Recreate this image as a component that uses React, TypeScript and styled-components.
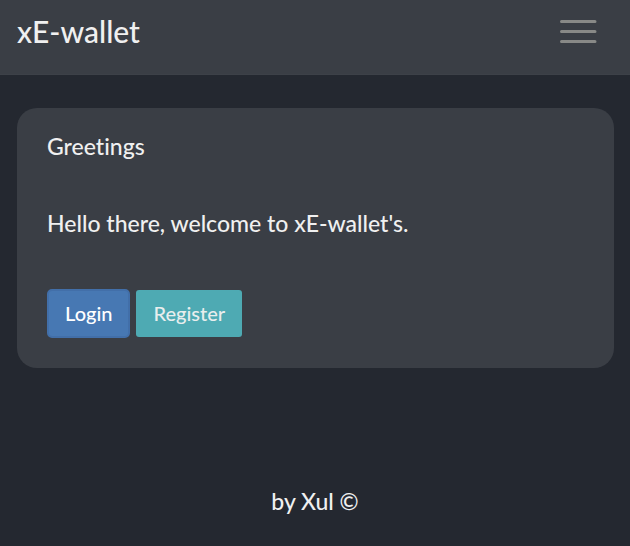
import React from "react";
import styled, { createGlobalStyle } from "styled-components";

const GlobalStyle = createGlobalStyle`
  * { box-sizing: border-box; }
  body {
    margin: 0;
    background: #242830;
    color: #f0f0f0;
    font-family: Lato, "Liberation Sans", sans-serif;
    font-size: 23px;
    font-weight: 500;
    line-height: 36px;
    font-variant-ligatures: none;
    -webkit-font-smoothing: antialiased;
  }
`;

const Navbar = styled.header`
  display: flex;
  justify-content: space-between;
  align-items: flex-start;
  padding: 13px 33px 25px 17px;
  border-bottom: 1px solid #3d4148;
  background: #3a3e45;
`;

const Brand = styled.a`
  color: inherit;
  font-size: 30px;
  text-decoration: none;
`;

const MenuButton = styled.button`
  display: flex;
  padding: 5px 0;
  border: 0;
  background: none;
  color: #888987;
  cursor: pointer;
`;

const Card = styled.main`
  margin: 33px 16px 0 17px;
  padding: 20px 30px 30px;
  border-radius: 20px;
  background: #3a3e45;
`;

const Title = styled.h1`
  margin: 0 0 41px;
  font-size: 23px;
  font-weight: 500;
`;

const Message = styled.p`
  margin: 0 0 48px;
`;

const Actions = styled.div`
  display: flex;
  align-items: center;
  gap: 6px;
`;

const Button = styled.button<{ $primary?: boolean }>`
  padding: ${(p) => (p.$primary ? "7px 16px 8px" : "8px 17px 9px")};
  border: ${(p) => (p.$primary ? "2px solid #426fa9" : "0")};
  border-radius: ${(p) => (p.$primary ? "5px" : "3px")};
  background: ${(p) => (p.$primary ? "#4778b3" : "#4eaab3")};
  color: ${(p) => (p.$primary ? "#ffffff" : "#e9eeee")};
  font: inherit;
  font-size: 20px;
  line-height: 30px;
  cursor: pointer;
`;

const Footer = styled.footer`
  padding: 115px 16px 26px;
  text-align: center;
`;

export default function App() {
  return (
    <>
      <GlobalStyle />
      <Navbar>
        <Brand href="#">xE-wallet</Brand>
        <MenuButton type="button" aria-label="Open menu">
          <svg width="37" height="26" viewBox="0 0 37 26" fill="none" stroke="currentColor" strokeWidth="3" strokeLinecap="round">
            <path d="M1.5 3.5H35M1.5 13.5H35M1.5 23.5H35" />
          </svg>
        </MenuButton>
      </Navbar>
      <Card>
        <Title>Greetings</Title>
        <Message>Hello there, welcome to xE-wallet's.</Message>
        <Actions>
          <Button type="button" $primary>Login</Button>
          <Button type="button">Register</Button>
        </Actions>
      </Card>
      <Footer>by Xul ©</Footer>
    </>
  );
}
